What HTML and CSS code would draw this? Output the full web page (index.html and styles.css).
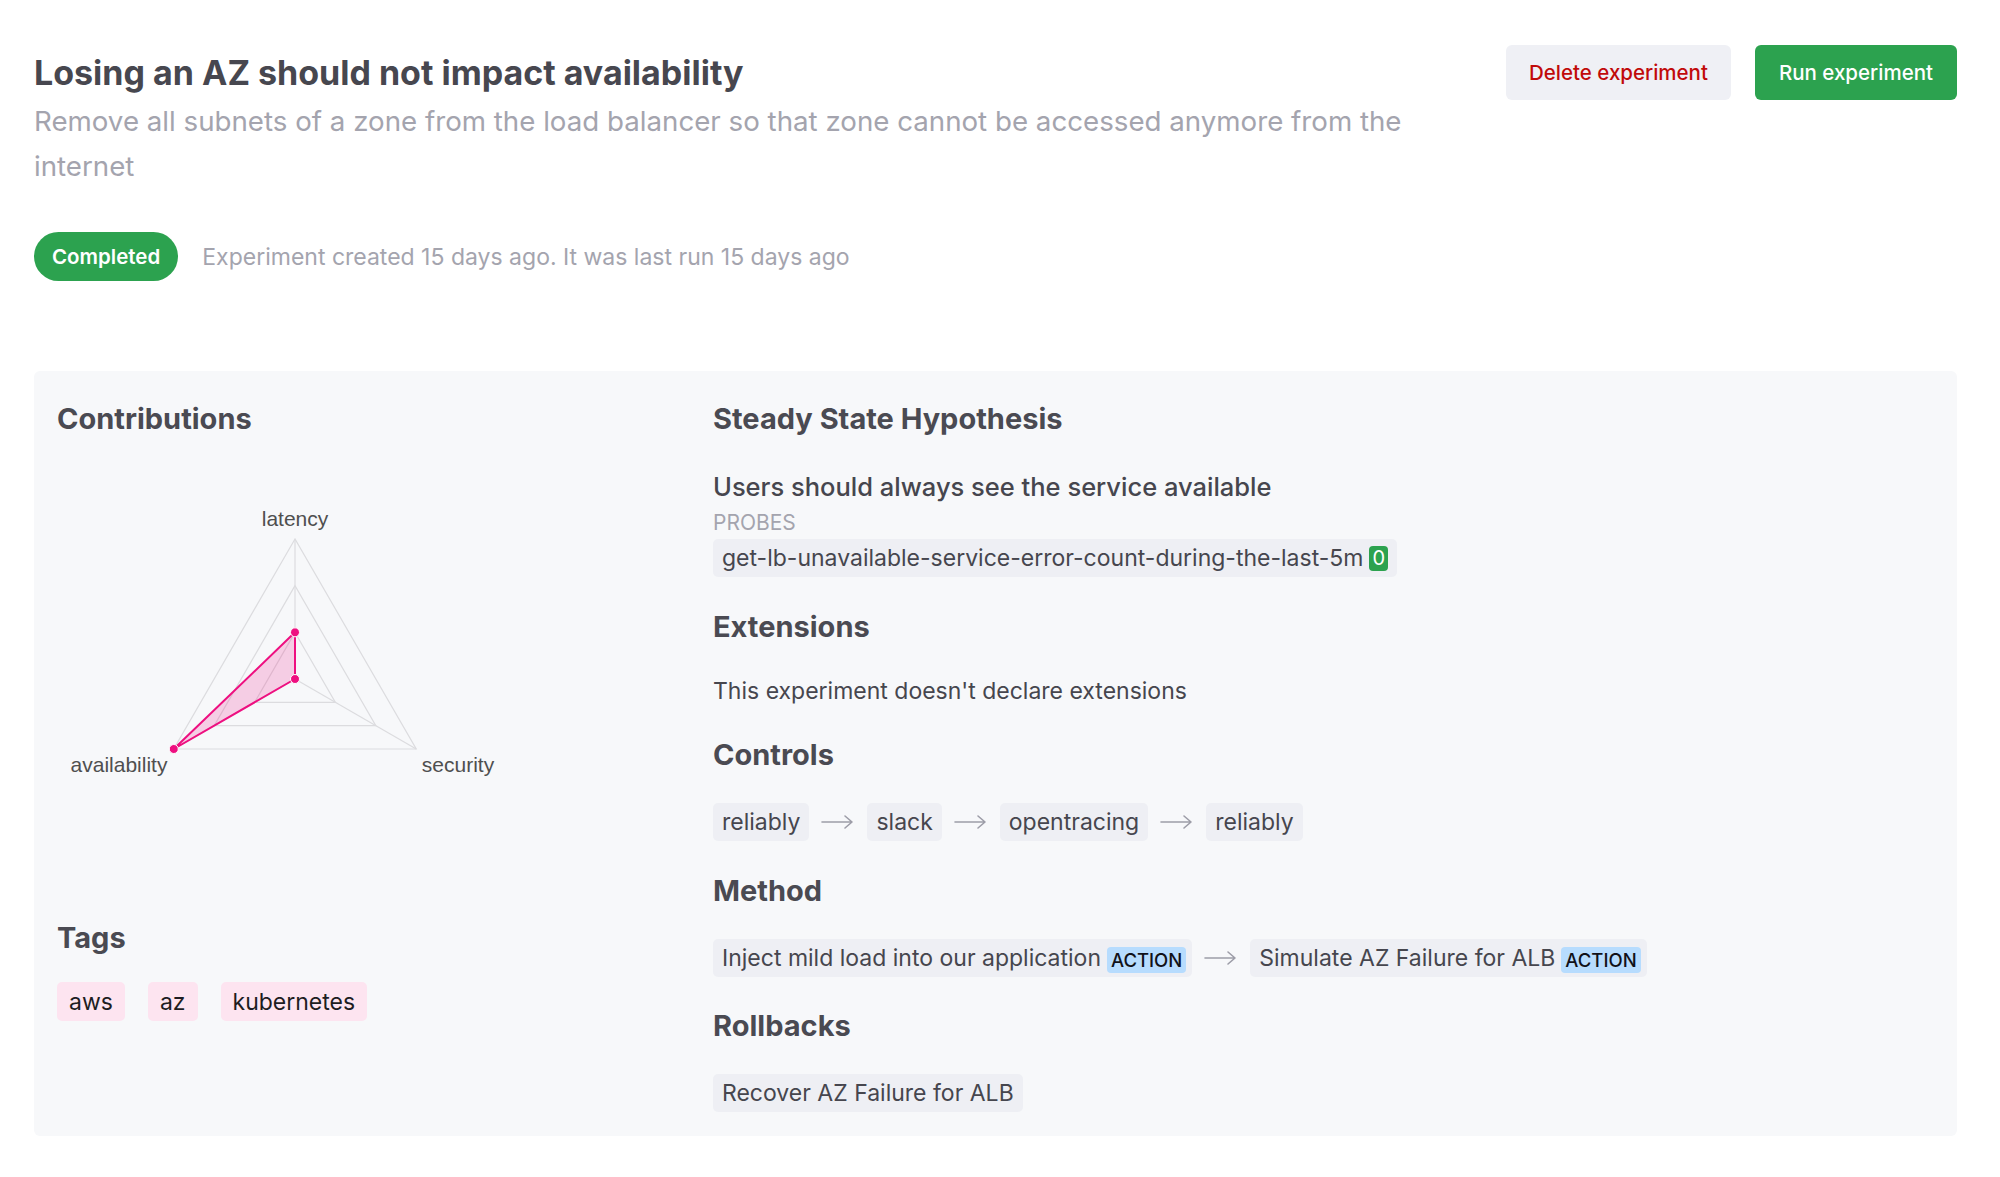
FILE: index.html
```html
<!DOCTYPE html>
<html lang="en">
<head>
<meta charset="utf-8">
<title>Experiment</title>
<link rel="stylesheet" href="styles.css">
</head>
<body>
<div class="page">
  <header class="header">
    <div class="intro">
      <h1 class="title">Losing an AZ should not impact availability</h1>
      <p class="desc">Remove all subnets of a zone from the load balancer so that zone cannot be accessed anymore from the internet</p>
    </div>
    <div class="actions">
      <button class="btn btn-delete">Delete experiment</button>
      <button class="btn btn-run">Run experiment</button>
    </div>
  </header>

  <div class="meta">
    <span class="status">Completed</span>
    <span class="meta-text">Experiment created 15 days ago. It was last run 15 days ago</span>
  </div>

  <main class="panel">
    <section class="left">
      <h2 class="heading">Contributions</h2>
      <svg class="radar" width="500" height="300" viewBox="0 0 500 300">
        <g class="grid">
          <polygon points="238,50 116.76,260 359.24,260"/>
          <polygon points="238,96.67 157.17,236.67 318.83,236.67"/>
          <polygon points="238,143.33 197.59,213.33 278.41,213.33"/>
          <line x1="238" y1="190" x2="238" y2="50"/>
          <line x1="238" y1="190" x2="116.76" y2="260"/>
          <line x1="238" y1="190" x2="359.24" y2="260"/>
        </g>
        <polygon class="area" points="238,143.33 238,190 116.76,260"/>
        <circle class="dot" cx="238" cy="143.33" r="4.5"/>
        <circle class="dot" cx="238" cy="190" r="4.5"/>
        <circle class="dot" cx="116.76" cy="260" r="4.5"/>
        <text class="axis-label" x="238" y="37" text-anchor="middle">latency</text>
        <text class="axis-label" x="62" y="283" text-anchor="middle">availability</text>
        <text class="axis-label" x="401" y="283" text-anchor="middle">security</text>
      </svg>
      <h2 class="heading tags-heading">Tags</h2>
      <div class="tags">
        <span class="tag">aws</span>
        <span class="tag">az</span>
        <span class="tag">kubernetes</span>
      </div>
    </section>

    <section class="right">
      <div class="block">
        <h2 class="heading">Steady State Hypothesis</h2>
        <h3 class="subheading">Users should always see the service available</h3>
        <div class="label">PROBES</div>
        <div class="chips probe-row">
          <span class="chip">get-lb-unavailable-service-error-count-during-the-last-5m<span class="count">0</span></span>
        </div>
      </div>

      <div class="block">
        <h2 class="heading">Extensions</h2>
        <p class="text">This experiment doesn't declare extensions</p>
      </div>

      <div class="block">
        <h2 class="heading">Controls</h2>
        <div class="chips">
          <span class="chip">reliably</span>
          <svg class="arrow" width="34" height="16" viewBox="0 0 34 16"><path d="M1 8H31M24 2l7 6-7 6"/></svg>
          <span class="chip">slack</span>
          <svg class="arrow" width="34" height="16" viewBox="0 0 34 16"><path d="M1 8H31M24 2l7 6-7 6"/></svg>
          <span class="chip">opentracing</span>
          <svg class="arrow" width="34" height="16" viewBox="0 0 34 16"><path d="M1 8H31M24 2l7 6-7 6"/></svg>
          <span class="chip">reliably</span>
        </div>
      </div>

      <div class="block">
        <h2 class="heading">Method</h2>
        <div class="chips">
          <span class="chip chip-action">Inject mild load into our application<span class="kind">ACTION</span></span>
          <svg class="arrow" width="34" height="16" viewBox="0 0 34 16"><path d="M1 8H31M24 2l7 6-7 6"/></svg>
          <span class="chip chip-action">Simulate AZ Failure for ALB<span class="kind">ACTION</span></span>
        </div>
      </div>

      <div class="block">
        <h2 class="heading">Rollbacks</h2>
        <div class="chips">
          <span class="chip">Recover AZ Failure for ALB</span>
        </div>
      </div>
    </section>
  </main>
</div>
</body>
</html>
```

FILE: styles.css
```css
* { box-sizing: border-box; }

html, body {
  margin: 0;
  background: #ffffff;
}

body {
  font-family: Inter, "Noto Sans", "Liberation Sans", sans-serif;
  color: #46464e;
}

.page {
  padding: 45px 43px 40px 34px;
}

.header {
  display: flex;
  justify-content: space-between;
  align-items: flex-start;
}

.intro {
  width: 1400px;
  padding-top: 8px;
}

.title {
  margin: 0;
  font-size: 34px;
  line-height: 40px;
  font-weight: 700;
  color: #47474f;
}

.desc {
  margin: 6px 0 0;
  font-size: 27.7px;
  line-height: 45px;
  color: #a4a4ae;
  font-weight: 400;
}

.actions {
  display: flex;
  gap: 24px;
}

.btn {
  height: 55px;
  border: none;
  border-radius: 6px;
  padding: 0 23px;
  font-family: Inter, "Noto Sans", sans-serif;
  font-size: 20.5px;
  font-weight: 500;
  cursor: pointer;
}

.btn-delete {
  background: #eff0f5;
  color: #c10a0a;
}

.btn-run {
  background: #2ca24f;
  color: #ffffff;
  padding: 0 24px;
}

.meta {
  display: flex;
  align-items: center;
  gap: 24px;
  margin-top: 43px;
}

.status {
  display: inline-flex;
  align-items: center;
  height: 49px;
  padding: 0 18px;
  border-radius: 25px;
  background: #2ca24f;
  color: #ffffff;
  font-size: 20.5px;
  font-weight: 600;
}

.meta-text {
  font-size: 23px;
  color: #a4a4ae;
}

.panel {
  display: grid;
  grid-template-columns: 632px 1fr;
  column-gap: 24px;
  margin-top: 90px;
  padding: 30px 23px 24px;
  background: #f7f8fa;
  border-radius: 6px;
}

.heading {
  margin: 0;
  font-size: 29px;
  line-height: 36px;
  font-weight: 700;
  color: #4a4a52;
}

.left {
  display: flex;
  flex-direction: column;
}

.radar {
  display: block;
  margin-top: 52px;
}

.grid polygon,
.grid line {
  fill: none;
  stroke: #dcdcdf;
  stroke-width: 1.2;
}

.area {
  fill: rgba(240, 12, 128, 0.18);
  stroke: #ee0f80;
  stroke-width: 2;
  stroke-linejoin: round;
}

.dot {
  fill: #ee0f80;
  stroke: #ffffff;
  stroke-width: 1;
}

.axis-label {
  font-family: "Liberation Sans", Arial, sans-serif;
  font-size: 21px;
  fill: #4f4f4f;
}

.tags-heading {
  margin-top: 131px;
}

.tags {
  display: flex;
  gap: 23px;
  margin-top: 26px;
}

.tag {
  display: inline-flex;
  align-items: center;
  height: 39px;
  padding: 0 12px;
  border-radius: 5px;
  background: #fde4f0;
  color: #1d1d22;
  font-size: 23px;
}

.right {
  display: flex;
  flex-direction: column;
  gap: 31.5px;
}

.subheading {
  margin: 35px 0 0;
  font-size: 25.5px;
  line-height: 30px;
  font-weight: 500;
  color: #46464e;
}

.label {
  margin-top: 9px;
  font-size: 21px;
  line-height: 24px;
  color: #a4a4ae;
}

.chips {
  display: flex;
  align-items: center;
  gap: 12px;
  margin-top: 30px;
}

.probe-row {
  margin-top: 4px;
}

.chip {
  display: inline-flex;
  align-items: center;
  height: 38px;
  padding: 0 9px;
  border-radius: 5px;
  background: #eeeff4;
  color: #46464e;
  font-size: 23px;
}

.chip-action {
  padding-right: 6px;
}

.count {
  display: inline-flex;
  align-items: center;
  justify-content: center;
  height: 25px;
  min-width: 18px;
  margin-left: 6px;
  padding: 0 3px;
  border-radius: 4px;
  background: #2ca24f;
  color: #ffffff;
  font-size: 20px;
}

.kind {
  display: inline-flex;
  align-items: center;
  height: 26px;
  margin-left: 6px;
  margin-top: 4px;
  padding: 0 4px;
  border-radius: 4px;
  background: #b7dcfe;
  color: #111118;
  font-size: 18.5px;
  font-weight: 500;
}

.arrow path {
  fill: none;
  stroke: #9d9da8;
  stroke-width: 1.6;
  stroke-linecap: round;
  stroke-linejoin: round;
}

.text {
  margin: 31px 0 0;
  font-size: 23px;
  line-height: 30px;
  color: #46464e;
}
```
